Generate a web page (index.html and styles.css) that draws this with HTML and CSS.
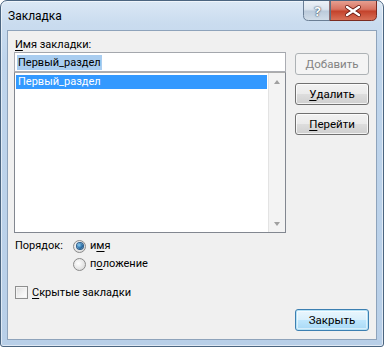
FILE: index.html
```html
<!DOCTYPE html>
<html lang="ru">
<head>
<meta charset="utf-8">
<title>Закладка</title>
<link rel="stylesheet" href="styles.css">
</head>
<body>
<div class="window">
  <div class="titlebar">
    <span class="title">Закладка</span>
    <div class="caption-buttons">
      <svg class="cap-svg" width="74" height="20" viewBox="0 0 74 20">
        <defs>
          <linearGradient id="gh" x1="0" y1="0" x2="0" y2="1">
            <stop offset="0" stop-color="#eef3f8"/>
            <stop offset="0.45" stop-color="#dbe4ee"/>
            <stop offset="0.55" stop-color="#bccbdc"/>
            <stop offset="1" stop-color="#d2dee9"/>
          </linearGradient>
          <linearGradient id="gc" x1="0" y1="0" x2="0" y2="1">
            <stop offset="0" stop-color="#e8a496"/>
            <stop offset="0.45" stop-color="#d87361"/>
            <stop offset="0.55" stop-color="#c4432c"/>
            <stop offset="1" stop-color="#d9735a"/>
          </linearGradient>
        </defs>
        <path d="M0.5 -1 V14.5 Q0.5 19.5 5.5 19.5 H27 V-1 Z" fill="url(#gh)" stroke="#6a7e95"/>
        <path d="M27 -1 V19.5 H68.5 Q73.5 19.5 73.5 14.5 V-1 Z" fill="url(#gc)" stroke="#7a2b22"/>
        <path d="M27.5 0 V19" stroke="#5e6f82" stroke-width="1"/>
        <path d="M44 6 L56 14 M56 6 L44 14" stroke="#6b1c14" stroke-width="4" stroke-linecap="round"/>
        <path d="M44 6 L56 14 M56 6 L44 14" stroke="#ffffff" stroke-width="2.4" stroke-linecap="round"/>
      </svg>
      <span class="help-glyph">?</span>
    </div>
  </div>
  <div class="client">
    <div class="top">
      <div class="leftcol">
        <div class="label"><u>И</u>мя закладки:</div>
        <div class="textbox"><span class="sel">Первый_раздел</span></div>
        <div class="listbox">
          <div class="items">
            <div class="item selected">Первый_раздел</div>
          </div>
          <div class="scrollbar">
            <span class="arrow up"></span>
            <span class="arrow down"></span>
          </div>
        </div>
      </div>
      <div class="rightcol">
        <div class="btn disabled">Добавить</div>
        <div class="btn"><u>У</u>далить</div>
        <div class="btn"><u>П</u>ерейти</div>
      </div>
    </div>
    <div class="order">
      <div class="order-label">Порядок:</div>
      <div class="radios">
        <div class="opt"><span class="radio checked"></span>и<u>м</u>я</div>
        <div class="opt"><span class="radio"></span>п<u>о</u>ложение</div>
      </div>
    </div>
    <div class="check-row"><span class="checkbox"></span><u>С</u>крытые закладки</div>
    <div class="footer">
      <div class="btn default">Закрыть</div>
    </div>
  </div>
</div>
</body>
</html>
```
FILE: styles.css
```css
* { box-sizing: border-box; }
html, body { margin: 0; padding: 0; background: #ffffff; }
body {
  font-family: Roboto, "Noto Sans", sans-serif;
  font-size: 11px;
  color: #000;
}
u { text-decoration: underline; text-underline-offset: 2px; }

.window {
  width: 384px;
  height: 347px;
  border: 1px solid #4b6580;
  border-radius: 7px 7px 3px 3px;
  background: linear-gradient(180deg, #dbe8f5 0px, #cadcef 22px, #bfd5ec 60px, #b8cfe8 100%);
  box-shadow: inset 0 0 0 1px rgba(255,255,255,0.55);
  display: flex;
  flex-direction: column;
  overflow: hidden;
}

.titlebar {
  height: 29px;
  flex: none;
  display: flex;
  align-items: flex-start;
  padding-left: 7px;
}
.title {
  margin-top: 7px;
  font-size: 12px;
  color: #000;
  line-height: 16px;
}
.caption-buttons {
  flex: none;
  position: relative;
  width: 74px;
  height: 20px;
  margin-left: auto;
  margin-right: 6px;
}
.cap-svg { display: block; }
.help-glyph {
  position: absolute;
  left: 1px;
  top: 0;
  width: 27px;
  height: 20px;
  line-height: 20px;
  text-align: center;
  color: #ffffff;
  font-family: "Noto Sans", sans-serif;
  font-weight: bold;
  font-size: 13px;
  text-shadow: 0 0 2px #2f4257, 0 0 1px #2f4257;
}

.client {
  margin: 0 6px 6px 6px;
  flex: 1;
  background: #f0f0f0;
  border: 1px solid #8ea3bb;
  padding: 7px 7px 8px 6px;
  display: flex;
  flex-direction: column;
}

.top {
  display: flex;
  gap: 9px;
}
.leftcol {
  width: 272px;
  display: flex;
  flex-direction: column;
}
.label {
  height: 14px;
  line-height: 14px;
  padding-left: 1px;
}
.textbox {
  height: 20px;
  background: #fff;
  border: 1px solid #abadb3;
  border-top-color: #a4a7ad;
  padding: 1px 2px;
  display: flex;
  align-items: center;
}
.sel {
  background: #a9cdf0;
  color: #000;
  line-height: 15px;
  padding: 0 1px;
}
.listbox {
  height: 161px;
  background: #fff;
  border: 1px solid #828790;
  border-top-color: #acacac;
  display: flex;
}
.items {
  flex: 1;
  padding: 2px 1px;
}
.item {
  height: 14px;
  line-height: 14px;
  padding-left: 2px;
}
.item.selected {
  background: #3399ff;
  color: #fff;
}
.scrollbar {
  width: 17px;
  border-left: 1px solid #e3e3e3;
  background: #f3f3f3;
  display: flex;
  flex-direction: column;
  justify-content: space-between;
  align-items: center;
  padding: 7px 0 6px;
}
.arrow {
  width: 0;
  height: 0;
  border-left: 3px solid transparent;
  border-right: 3px solid transparent;
}
.arrow.up { border-bottom: 4px solid #a0a0a0; }
.arrow.down { border-top: 4px solid #a0a0a0; }

.rightcol {
  display: flex;
  flex-direction: column;
  gap: 8px;
  padding-top: 15px;
}
.btn {
  width: 74px;
  height: 22px;
  border: 1px solid #707070;
  border-radius: 3px;
  background: linear-gradient(180deg, #f2f2f2 0%, #ebebeb 48%, #dddddd 52%, #cfcfcf 100%);
  box-shadow: inset 0 0 0 1px rgba(255,255,255,0.75);
  display: flex;
  align-items: center;
  justify-content: center;
  line-height: 14px;
  font-size: 11.5px;
}
.btn.disabled {
  border-color: #adb2b5;
  background: #f4f4f4;
  color: #838383;
  box-shadow: none;
}
.btn.default {
  border-color: #3c7fb1;
  box-shadow: inset 0 0 0 1px #b6e2f6, inset 0 0 0 2px rgba(255,255,255,0.5);
  background: linear-gradient(180deg, #eaf6fd 0%, #d9f0fc 48%, #bee6fd 52%, #a7d9f5 100%);
}

.order {
  margin-top: 5px;
  display: flex;
  padding-left: 1px;
}
.order-label {
  width: 58px;
  line-height: 16px;
}
.radios {
  display: flex;
  flex-direction: column;
  gap: 2px;
}
.opt {
  height: 16px;
  line-height: 16px;
  display: flex;
  align-items: center;
}
.radio {
  width: 13px;
  height: 13px;
  border-radius: 50%;
  border: 1px solid #8a8a8a;
  background: radial-gradient(circle at 40% 40%, #ffffff 0%, #e4e4e4 60%, #cfcfcf 100%);
  margin-right: 4px;
  display: flex;
  align-items: center;
  justify-content: center;
}
.radio.checked::after {
  content: "";
  width: 6px;
  height: 6px;
  border-radius: 50%;
  background: radial-gradient(circle at 35% 35%, #8fd0f5 0%, #2a6fa8 55%, #0f3f6e 100%);
  box-shadow: 0 0 0 1px #2a5d8c;
}

.check-row {
  margin-top: 12px;
  height: 16px;
  display: flex;
  align-items: center;
  padding-left: 1px;
}
.checkbox {
  width: 13px;
  height: 13px;
  border: 1px solid #8e8f8f;
  background: linear-gradient(135deg, #dcdcdc 0%, #f4f4f4 60%, #ffffff 100%);
  box-shadow: inset 0 0 0 1px #f4f4f4;
  margin-right: 4px;
}

.footer {
  margin-top: auto;
  display: flex;
  justify-content: flex-end;
}
```
